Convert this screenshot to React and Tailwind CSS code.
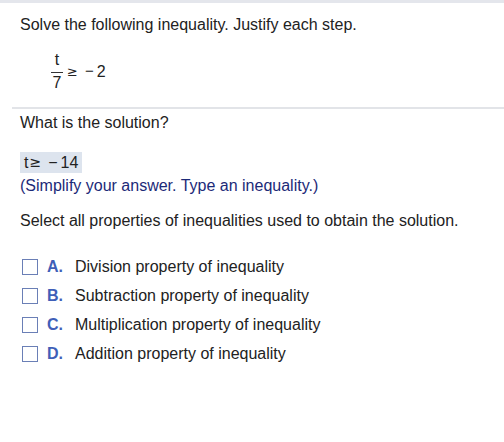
import React from 'react'

const options = [
  { letter: 'A.', text: 'Division property of inequality' },
  { letter: 'B.', text: 'Subtraction property of inequality' },
  { letter: 'C.', text: 'Multiplication property of inequality' },
  { letter: 'D.', text: 'Addition property of inequality' },
]

function App() {
  return (
    <div className="w-[504px] h-[442px] bg-white text-[#222] overflow-hidden" style={{ fontFamily: '"Liberation Sans", Arial, sans-serif' }}>
      <div className="h-[3px] bg-[#e4e6ec]"></div>

      {/* Question */}
      <div className="pl-[20px] pt-[12px]">
        <p className="text-[16px] leading-[20px]">Solve the following inequality. Justify each step.</p>
        <div className="flex items-center pl-[31px] mt-[17px]">
          <div className="flex flex-col items-center text-[16px] leading-[16px]">
            <span>t</span>
            <span className="w-[12px] h-px bg-[#333] mt-[4px] mb-[2px]"></span>
            <span>7</span>
          </div>
          <span className="text-[13px] ml-[4px] font-['DejaVu_Sans',sans-serif]">≥</span>
          <span className="text-[15px] ml-[7px]">−</span>
          <span className="text-[16px] ml-[3px]">2</span>
        </div>
      </div>

      <div className="ml-[12px] mt-[16px] h-[2px] bg-[#e2e4e8]"></div>

      {/* Answer */}
      <div className="pl-[20px] pt-[4px]">
        <p className="text-[16px] leading-[20px]">What is the solution?</p>
        <div className="mt-[19px] inline-flex items-center h-[21px] px-[4px] bg-[#dde4ee] text-[16px]">
          <span>t</span>
          <span className="text-[14px] ml-[1px] font-['DejaVu_Sans',sans-serif]">≥</span>
          <span className="ml-[7px]">−</span>
          <span className="ml-[3px]">14</span>
        </div>
        <p className="text-[16px] leading-[20px] text-[#1c2a78] mt-[1px]">(Simplify your answer. Type an inequality.)</p>
        <p className="text-[16px] leading-[20px] mt-[15px]">Select all properties of inequalities used to obtain the solution.</p>

        <div className="mt-[26px] flex flex-col gap-[9px]">
          {options.map((o) => (
            <div key={o.letter} className="flex items-center h-[20px]">
              <span className="w-[16px] h-[16px] border border-[#6a7fb6] ml-[2px] bg-white"></span>
              <span className="ml-[9px] w-[28px] text-[16px] font-bold text-[#3f5fb8]">{o.letter}</span>
              <span className="text-[16px]">{o.text}</span>
            </div>
          ))}
        </div>
      </div>
    </div>
  )
}

export default App
